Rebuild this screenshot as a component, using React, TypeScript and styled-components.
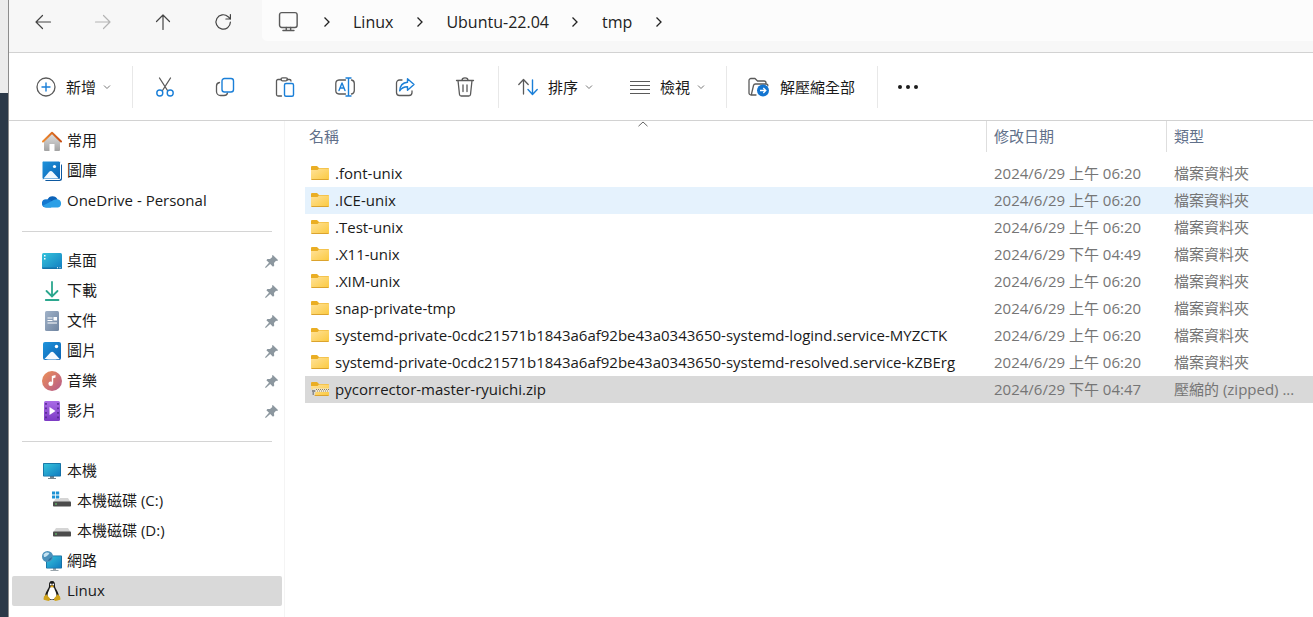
import React from "react";
import styled, { createGlobalStyle, css } from "styled-components";

const GlobalStyle = createGlobalStyle`
  *, *::before, *::after { box-sizing: border-box; }
  body {
    margin: 0;
    background: #fff;
    color: #1a1a1a;
    font: 15px/20px "Open Sans", "Noto Sans CJK TC", sans-serif;
  }
  button { font: inherit; color: inherit; }
`;

const Screen = styled.div`
  display: flex;
  min-height: 100vh;
  overflow: hidden;
`;

const Desktop = styled.div`
  flex: none;
  width: 8px;
  background: linear-gradient(#ececec 0 93px, #2b3948 93px);
`;

const Window = styled.div`
  flex: 1;
  min-width: 0;
  display: flex;
  flex-direction: column;
  border-left: 1px solid #8c8c8c;
`;

const NavBar = styled.header`
  display: flex;
  align-items: flex-start;
  height: 53px;
  padding-left: 4px;
  background: #f7f7f7;
  border-bottom: 1px solid #d2d2d2;
`;

const IconButton = styled.button<{ $dim?: boolean }>`
  display: flex;
  align-items: center;
  justify-content: center;
  width: 60px;
  height: 44px;
  padding: 0;
  border: 0;
  background: none;
  color: ${(p) => (p.$dim ? "#b4b4b4" : "#444")};
`;

const AddressBar = styled.nav`
  flex: 1;
  display: flex;
  align-items: center;
  height: 41px;
  margin-left: 9px;
  padding: 3px 0 0 16px;
  background: #fcfcfc;
  border-bottom-left-radius: 5px;
`;

const Crumb = styled.a`
  color: #222;
  font-size: 16px;
  line-height: 24px;
  text-decoration: none;
  white-space: nowrap;
`;

const CrumbArrow = styled.span`
  display: flex;
  justify-content: center;
  width: 53px;
`;

const Toolbar = styled.div`
  display: flex;
  align-items: center;
  height: 68px;
  border-bottom: 1px solid #d2d2d2;
`;

const ToolGroup = styled.div<{ $pad: string }>`
  display: flex;
  align-items: center;
  height: 42px;
  padding: ${(p) => p.$pad};
  border-right: 1px solid #e8e8e8;
  &:last-child { border-right: 0; }
`;

const ToolButton = styled.button`
  display: flex;
  align-items: center;
  gap: 10px;
  height: 40px;
  padding: 0;
  border: 0;
  background: none;
  white-space: nowrap;
  & + & { margin-left: 37px; }
`;

const ToolLabel = styled.span`
  display: flex;
  align-items: center;
  gap: 7px;
`;

const Body = styled.div`
  flex: 1;
  display: flex;
`;

const Sidebar = styled.nav`
  flex: none;
  width: 276px;
  padding: 5px 2px 0 3px;
  border-right: 1px solid #f4f4f4;
`;

const PlaceList = styled.ul`
  margin: 0;
  padding: 0;
  list-style: none;
  & + & {
    padding-top: 30px;
    background: linear-gradient(#d4d4d4, #d4d4d4) 10px 15px / calc(100% - 20px) 1px no-repeat;
  }
`;

const Place = styled.a<{ $nested?: boolean; $active?: boolean }>`
  display: flex;
  align-items: center;
  gap: 5px;
  height: 30px;
  padding: 0 4px 0 ${(p) => (p.$nested ? 40 : 30)}px;
  border-radius: 2px;
  color: #1a1a1a;
  text-decoration: none;
  background: ${(p) => (p.$active ? "#d9d9d9" : "none")};
`;

const PlaceName = styled.span`
  flex: 1;
  padding-bottom: 2px;
  white-space: nowrap;
`;

const Files = styled.main`
  position: relative;
  flex: 1;
  min-width: 0;
  padding-left: 20px;
`;

const SortMark = styled.span`
  position: absolute;
  top: 0;
  left: calc((100% - 323px) / 2);
  display: flex;
`;

const Table = styled.table`
  width: 100%;
  table-layout: fixed;
  border-collapse: collapse;
`;

const Col = styled.col<{ $w?: number }>`
  ${(p) => p.$w && css`width: ${p.$w}px;`}
`;

const HeadCell = styled.th`
  padding: 0 0 8px;
  color: #61708a;
  font-weight: 400;
  text-align: left;
`;

const HeadLabel = styled.div<{ $first?: boolean }>`
  height: 31px;
  padding: 5px 0 0 ${(p) => (p.$first ? 4 : 7)}px;
  border-left: ${(p) => (p.$first ? "0" : "1px solid #dedede")};
`;

const FileRow = styled.tr<{ $state?: "hover" | "selected" }>`
  height: 27px;
  background: ${(p) =>
    p.$state === "hover" ? "#e5f2fd" : p.$state === "selected" ? "#d9d9d9" : "none"};
`;

const Cell = styled.td`
  padding: 0 0 2px 8px;
  color: #757575;
  white-space: nowrap;
  overflow: hidden;
`;

const FileName = styled.div`
  display: flex;
  align-items: center;
  gap: 6px;
  margin-left: -2px;
  color: #1a1a1a;
`;

const Svg = ({ size = 20, children }: { size?: number; children: React.ReactNode }) => (
  <svg width={size} height={size} viewBox="0 0 20 20" fill="none" aria-hidden="true">
    {children}
  </svg>
);

const line = { stroke: "currentColor", strokeWidth: 1.2, strokeLinecap: "round", strokeLinejoin: "round" } as const;
const grey = { ...line, stroke: "#5a5a5a", strokeWidth: 1.3 } as const;
const blue = { ...line, stroke: "#1a7fd8", strokeWidth: 1.4 } as const;

const Back = () => <Svg><path {...line} d="M17.500 10H3M9.500 3.500 3 10l6.500 6.500" /></Svg>;
const Forward = () => <Svg><path {...line} d="M2.500 10H17M10.500 3.500 17 10l-6.500 6.500" /></Svg>;
const Up = () => <Svg><path {...line} d="M10 17.500V3M3.500 9.500 10 3l6.500 6.500" /></Svg>;
const Refresh = () => (
  <Svg><path {...line} d="M17.400 10a7.200 7.200 0 1 1-2.300-5.300L17.400 7M17.400 2.500V7h-4.500" /></Svg>
);
const Monitor = () => (
  <Svg size={22}>
    <rect {...grey} x="1.400" y="1.500" width="16" height="13.500" rx="2" />
    <path {...grey} d="M7.500 15v2.500M11.500 15v2.500M4.500 17.800h10" />
  </Svg>
);
const ChevronRight = () => (
  <svg width="8" height="12" viewBox="0 0 8 12" fill="none" aria-hidden="true">
    <path d="M1.500 1.500 6 6l-4.500 4.500" stroke="#222" strokeWidth="1.300" />
  </svg>
);
const ChevronDown = () => (
  <svg width="8" height="6" viewBox="0 0 8 6" fill="none" aria-hidden="true">
    <path d="M1 1.500 4 4.500l3-3" stroke="#777" />
  </svg>
);
const ChevronUp = () => (
  <svg width="10" height="6" viewBox="0 0 10 6" fill="none" aria-hidden="true">
    <path d="M.5 5.200 5 1l4.500 4.200" stroke="#666" />
  </svg>
);

const Plus = () => (
  <Svg>
    <circle {...grey} cx="10" cy="10" r="9" />
    <path {...blue} d="M10 6v8M6 10h8" />
  </Svg>
);
const Cut = () => (
  <Svg>
    <path {...grey} d="M4.500 1 12.500 13.500M15.500 1 7.500 13.500" />
    <circle {...blue} cx="4.800" cy="16" r="3" />
    <circle {...blue} cx="15.200" cy="16" r="3" />
  </Svg>
);
const Copy = () => (
  <Svg>
    <path {...grey} d="M4.500 5.500C2.500 5.800 1.500 7 1.500 9v5.500a4 4 0 0 0 4 4H9c2 0 3.200-1 3.500-2.700" />
    <rect {...blue} x="7" y="1.500" width="11.500" height="13.500" rx="2.500" />
  </Svg>
);
const Paste = () => (
  <Svg>
    <path {...grey} d="M6 2.500H3A1.500 1.500 0 0 0 1.500 4v13.500A1.500 1.500 0 0 0 3 19h3.500M12 2.500h2.500A1.500 1.500 0 0 1 16 4" />
    <rect {...grey} x="6" y=".8" width="6.500" height="3" rx="1.500" />
    <rect {...blue} x="9.500" y="6.500" width="9" height="12.700" rx="1.500" />
  </Svg>
);
const Rename = () => (
  <Svg>
    <path {...grey} d="M10.500 3H4A3.500 3.500 0 0 0 .8 6.500v7A3.500 3.500 0 0 0 4 17h6.500M16.500 3c1.800.3 2.800 1.500 2.800 3.500v7c0 2-1 3.200-2.800 3.500" />
    <path {...blue} d="m4 13.500 3-7.500 3 7.500M5 11h4M13.500 1v18M11 1h5M11 19h5" />
  </Svg>
);
const Share = () => (
  <Svg>
    <path {...grey} d="M7 3H4.500a3 3 0 0 0-3 3v9.500a3 3 0 0 0 3 3H14a3 3 0 0 0 3-3V14" />
    <path {...blue} d="M12.500 1.800 19 7.500l-6.500 5.700V9.800c-3.300 0-5.800 1-7.800 4 .3-5 3-8.300 7.800-8.600Z" />
  </Svg>
);
const Trash = () => (
  <Svg>
    <path {...grey} d="M1.500 3.500h17M7 3.200C7 1.500 8.200.8 10 .8s3 .7 3 2.400M3 3.500l1.500 14a1.700 1.700 0 0 0 1.700 1.500h7.600a1.700 1.700 0 0 0 1.700-1.500L17 3.500M8 8v6.500M12 8v6.500" />
  </Svg>
);
const Sort = () => (
  <Svg>
    <path {...grey} d="M5.500 17V3M.8 7.500 5.500 2.500l4.700 5" />
    <path {...blue} d="M14.500 3v14M10 12.500l4.500 5 4.700-5" />
  </Svg>
);
const Lines = () => (
  <Svg>
    <path stroke="#5a5a5a" d="M0 4.500h20M0 8.500h20M0 12.500h20M0 16.500h20" />
  </Svg>
);
const Extract = () => (
  <svg width="22" height="20" viewBox="0 0 22 20" fill="none" aria-hidden="true">
    <path {...grey} d="M8 18H3a2 2 0 0 1-2-2V3.500a2 2 0 0 1 2-2h4L9.500 4H16a2 2 0 0 1 2 2M3.500 17l2-8.500A2 2 0 0 1 7.500 7H18c1.200 0 2 .7 1.800 1.500" />
    <circle cx="15" cy="13.500" r="6" fill="#1274d0" />
    <path d="M12 13.500h5.500M15.300 11l2.500 2.500-2.500 2.500" stroke="#fff" strokeWidth="1.300" />
  </svg>
);
const More = () => (
  <Svg>
    <g fill="#1c1c1c"><circle cx="2" cy="10" r="2" /><circle cx="10" cy="10" r="2" /><circle cx="18" cy="10" r="2" /></g>
  </Svg>
);

const DefsSvg = styled.svg`
  position: absolute;
`;

const Defs = () => (
  <DefsSvg width="0" height="0" aria-hidden="true">
    <defs>
      <linearGradient id="folder" x1="0" y1="0" x2="1" y2="1"><stop stopColor="#ffe29a" /><stop offset="1" stopColor="#fbc93e" /></linearGradient>
      <linearGradient id="sky" x1="0" y1="0" x2="1" y2="1"><stop stopColor="#1f94dc" /><stop offset="1" stopColor="#0b62b2" /></linearGradient>
      <linearGradient id="teal" x1="0" y1="0" x2="1" y2="1"><stop stopColor="#36c4dc" /><stop offset="1" stopColor="#117cc0" /></linearGradient>
      <linearGradient id="wall" x1="0" y1="0" x2="0" y2="1"><stop stopColor="#e2e2e2" /><stop offset="1" stopColor="#a2a2a2" /></linearGradient>
      <linearGradient id="roof"><stop stopColor="#ef8c30" /><stop offset="1" stopColor="#c74f16" /></linearGradient>
      <linearGradient id="page" x1="0" y1="0" x2="1" y2="1"><stop stopColor="#a0b2c8" /><stop offset="1" stopColor="#6f84a0" /></linearGradient>
      <linearGradient id="music" x1="0" y1="0" x2="1" y2="1"><stop stopColor="#ee9156" /><stop offset="1" stopColor="#b4598c" /></linearGradient>
      <linearGradient id="film" x1="0" y1="0" x2="0" y2="1"><stop stopColor="#a96be6" /><stop offset="1" stopColor="#7c3bc4" /></linearGradient>
    </defs>
  </DefsSvg>
);

const Home = () => (
  <Svg>
    <path d="M2 9.500 10 2l8 7.500V19a1 1 0 0 1-1 1h-4.500v-7h-5v7H3a1 1 0 0 1-1-1Z" fill="url(#wall)" />
    <path d="M1 10.500 10 1.800l9 8.700" stroke="url(#roof)" strokeWidth="2" strokeLinejoin="round" strokeLinecap="round" />
  </Svg>
);
const Gallery = () => (
  <Svg>
    <path d="M3 17h14V3h1.500A1.500 1.500 0 0 1 20 4.500v13a2.500 2.500 0 0 1-2.500 2.500h-13A1.500 1.500 0 0 1 3 18.500Z" fill="#0c58a0" />
    <rect width="18.500" height="18.500" rx="1.500" fill="url(#sky)" stroke="#fff" />
    <path d="m1.500 17.500 5.500-6.500a2.500 2.500 0 0 1 3.700 0l6 6.500Z" fill="#f2f9ff" />
    <circle cx="12.500" cy="5.500" r="1.600" fill="#fff" />
  </Svg>
);
const Cloud = () => (
  <Svg>
    <path d="M5.500 8.500A5.500 5.500 0 0 1 15.500 8.300L12 14H4Z" fill="#0c62b8" />
    <path d="M4 16.500a4 4 0 0 1 0-8.200c3 0 5 1.200 8 3.700l-3 4.500Z" fill="#1478d0" />
    <path d="M15.500 8.300a4.200 4.200 0 0 1 .5 8.200H4.500a4 4 0 0 1-3.500-2l9-4.500c1.500-1 3.500-2 5.500-1.700Z" fill="#2b9fe6" />
  </Svg>
);
const DesktopIcon = () => (
  <Svg>
    <rect y="2" width="20" height="16" rx="1.500" fill="url(#teal)" />
    <path d="M0 16.500h20a1.500 1.500 0 0 1-1.500 1.500h-17A1.500 1.500 0 0 1 0 16.500Z" fill="#1271a8" />
    <path d="M2 4h1.500v1.500H2ZM2 7h1.500v1.500H2ZM15 16.300h1v1h-1ZM17.500 16.300h1v1h-1Z" fill="#fff" />
  </Svg>
);
const Download = () => (
  <Svg><path d="M10 1v14M4.500 10l5.500 5.500 5.500-5.500M3.800 19h12.700" stroke="#2ba78e" strokeWidth="1.800" strokeLinecap="round" /></Svg>
);
const Document = () => (
  <Svg>
    <rect x="3" width="14" height="20" rx="1.500" fill="url(#page)" />
    <path d="M5.500 7h5M5.500 9.500h5M5.500 12h9.500" stroke="#fff" strokeWidth="1.200" />
    <rect x="11.500" y="6" width="3.500" height="3.500" fill="#fff" />
  </Svg>
);
const Picture = () => (
  <Svg>
    <rect x="1" y="1" width="18" height="18" rx="2" fill="url(#sky)" />
    <path d="m2.500 18 6-6.500a2.200 2.200 0 0 1 3.200 0l6 6.500c-.3.500-14.700.7-15.200 0Z" fill="#f5faff" />
    <circle cx="14.500" cy="5.500" r="1.700" fill="#fff" />
  </Svg>
);
const Music = () => (
  <Svg>
    <circle cx="10" cy="10" r="10" fill="url(#music)" />
    <circle cx="8.700" cy="12.800" r="2.300" fill="#fff" />
    <path d="M9.800 12.800V5L13.500 4v2.600l-2.300.7v5.500Z" fill="#fff" />
  </Svg>
);
const Video = () => (
  <Svg>
    <rect x="2" width="16" height="20" rx="1.500" fill="url(#film)" />
    <path d="M4 2v17M16 2v17" stroke="#4c2386" strokeWidth="1.500" strokeDasharray="1.800 2.700" />
    <path d="M7.500 6v8l6-4Z" fill="#fff" />
  </Svg>
);
const ThisPC = () => (
  <Svg>
    <path d="M8 15h4v2H8ZM6 17h8v1H6Z" fill="#77838c" />
    <rect x="1" y="2" width="18" height="13.500" rx=".8" fill="#136a9e" />
    <rect x="1.800" y="2.800" width="16.400" height="12" fill="url(#teal)" />
  </Svg>
);
const Drive = ({ system }: { system?: boolean }) => (
  <Svg>
    <path d="m4 7-2.500 4h17L16 7Z" fill="#d5d5d5" />
    {system && (
      <>
        <path d="M0 0h8v8H0Z" fill="#fff" />
        <path d="M0 .5h3.200v3H0ZM4 .5h3.200v3H4ZM0 4.500h3.200v3H0ZM4 4.500h3.200v3H4Z" fill="#1c92d4" />
      </>
    )}
    <rect x="1" y="10.500" width="18" height="5" rx=".8" fill="#4c4c4c" />
    <path d="M3 13h2" stroke="#62d16c" strokeWidth="1.200" />
  </Svg>
);
const Network = () => (
  <Svg>
    <path d="M11 17h3v2h-3ZM8.500 19h8v1h-8Z" fill="#9aa5ac" />
    <rect x="4" y="4.500" width="16" height="13" rx=".8" fill="#136a9e" />
    <rect x="4.800" y="5.300" width="14.400" height="11.500" fill="url(#teal)" />
    <circle cx="5.500" cy="5.500" r="5.500" fill="#4b91bb" />
    <path d="M1.500 3.500C3 1 6 1 7.500 2 6.500 4 3.500 6.500 2 6Z" fill="#c5e3f2" />
    <path d="M6 10c1-3 3-3 4-4-.2 2-1.700 3.800-4 4Z" fill="#2a6d9c" />
  </Svg>
);
const Penguin = () => (
  <Svg>
    <path d="M10 0C7.500 0 6.800 2 7 5c0 2.500-3.500 5.500-4 10l3 4h8l3-4c-.5-4.500-4-7.500-4-10 .2-3-.5-5-3-5Z" fill="#191919" />
    <path d="M10 6c-1.500 0-2 .5-2.300 1.500C7 10 5.300 12 5.500 15c.2 2 2.500 3.500 4.500 3.500s4.300-1.500 4.500-3.500c.2-3-1.500-5-2.200-7.500C12 6.500 11.500 6 10 6Z" fill="#fff" />
    <circle cx="8.800" cy="3.500" r=".9" fill="#fff" /><circle cx="11.200" cy="3.500" r=".9" fill="#fff" />
    <path d="M8 5.200 10 4.300l2 .9-2 1.500Z" fill="#e5a914" />
    <path d="M4 13 7.800 17.300c.7 1.700-.5 2.900-2.300 2.500L1.800 18.700c-.8-.7.2-1.700 0-2.700.2-1.300 1.500-.8 2.200-3ZM16 13 12.200 17.300c-.7 1.700.5 2.900 2.300 2.500l3.700-1.100c.8-.7-.2-1.700 0-2.700-.2-1.300-1.500-.8-2.200-3Z" fill="#d0a31c" />
  </Svg>
);
const Pin = () => (
  <svg width="13" height="13" viewBox="0 0 13 13" aria-hidden="true">
    <path d="M7.800 0 13 5l-.7 1-1.300-.2-2 2.200.2 2.700-1.200 1L5.200 9 .8 13 0 12.200l4-4.500-2.600-2.500 1-1.200L5 4l2.300-2-.3-1.300Z" fill="#8c979f" />
  </svg>
);
const Folder = ({ zip }: { zip?: boolean }) => (
  <svg width="18" height="16" viewBox="0 0 18 16" aria-hidden="true">
    <path d="M0 2a1 1 0 0 1 1-1h5l2 2h9a1 1 0 0 1 1 1v4H0Z" fill="#eaae24" />
    <path d="M0 5h6.500L8 3.500h10V14a1 1 0 0 1-1 1H1a1 1 0 0 1-1-1Z" fill="url(#folder)" />
    <path d="M.5 14.500h17" stroke="#dba32e" />
    {zip && (
      <>
        <path d="M2 7.500h16v3.500H2Z" fill="#f1e9d2" />
        <path d="M5 8.500h13M4 10h14" stroke="#8b7f62" strokeDasharray="1 1" />
        <path d="M0 8.500h4.500v2.500l-1 4H0Z" fill="#d9d9d9" />
        <path d="M1 9h3v2H1ZM1.500 11h1.500v3H1.500Z" fill="#8d8d8d" />
      </>
    )}
  </svg>
);

type PlaceData = { name: string; icon: React.ReactNode; pinned?: boolean; nested?: boolean; active?: boolean };

const places: PlaceData[][] = [
  [
    { name: "常用", icon: <Home /> },
    { name: "圖庫", icon: <Gallery /> },
    { name: "OneDrive - Personal", icon: <Cloud /> },
  ],
  [
    { name: "桌面", icon: <DesktopIcon />, pinned: true },
    { name: "下載", icon: <Download />, pinned: true },
    { name: "文件", icon: <Document />, pinned: true },
    { name: "圖片", icon: <Picture />, pinned: true },
    { name: "音樂", icon: <Music />, pinned: true },
    { name: "影片", icon: <Video />, pinned: true },
  ],
  [
    { name: "本機", icon: <ThisPC /> },
    { name: "本機磁碟 (C:)", icon: <Drive system />, nested: true },
    { name: "本機磁碟 (D:)", icon: <Drive />, nested: true },
    { name: "網路", icon: <Network /> },
    { name: "Linux", icon: <Penguin />, active: true },
  ],
];

type FileData = { name: string; date: string; state?: "hover" | "selected"; zip?: boolean };

const files: FileData[] = [
  { name: ".font-unix", date: "2024/6/29 上午 06:20" },
  { name: ".ICE-unix", date: "2024/6/29 上午 06:20", state: "hover" },
  { name: ".Test-unix", date: "2024/6/29 上午 06:20" },
  { name: ".X11-unix", date: "2024/6/29 下午 04:49" },
  { name: ".XIM-unix", date: "2024/6/29 上午 06:20" },
  { name: "snap-private-tmp", date: "2024/6/29 上午 06:20" },
  { name: "systemd-private-0cdc21571b1843a6af92be43a0343650-systemd-logind.service-MYZCTK", date: "2024/6/29 上午 06:20" },
  { name: "systemd-private-0cdc21571b1843a6af92be43a0343650-systemd-resolved.service-kZBErg", date: "2024/6/29 上午 06:20" },
  { name: "pycorrector-master-ryuichi.zip", date: "2024/6/29 下午 04:47", state: "selected", zip: true },
];

export default function App() {
  return (
    <Screen>
      <GlobalStyle />
      <Defs />
      <Desktop />
      <Window>
        <NavBar>
          <IconButton aria-label="上一頁"><Back /></IconButton>
          <IconButton aria-label="下一頁" $dim><Forward /></IconButton>
          <IconButton aria-label="上移"><Up /></IconButton>
          <IconButton aria-label="重新整理"><Refresh /></IconButton>
          <AddressBar aria-label="路徑">
            <Monitor />
            {["Linux", "Ubuntu-22.04", "tmp"].map((name) => (
              <React.Fragment key={name}>
                <CrumbArrow><ChevronRight /></CrumbArrow>
                <Crumb href="#">{name}</Crumb>
              </React.Fragment>
            ))}
            <CrumbArrow><ChevronRight /></CrumbArrow>
          </AddressBar>
        </NavBar>
        <Toolbar>
          <ToolGroup $pad="0 21px 0 27px">
            <ToolButton><Plus /><ToolLabel>新增 <ChevronDown /></ToolLabel></ToolButton>
          </ToolGroup>
          <ToolGroup $pad="0 3px 0 2px">
            <IconButton aria-label="剪下"><Cut /></IconButton>
            <IconButton aria-label="複製"><Copy /></IconButton>
            <IconButton aria-label="貼上"><Paste /></IconButton>
            <IconButton aria-label="重新命名"><Rename /></IconButton>
            <IconButton aria-label="共用"><Share /></IconButton>
            <IconButton aria-label="刪除"><Trash /></IconButton>
          </ToolGroup>
          <ToolGroup $pad="0 21px 0 19px">
            <ToolButton><Sort /><ToolLabel>排序 <ChevronDown /></ToolLabel></ToolButton>
            <ToolButton><Lines /><ToolLabel>檢視 <ChevronDown /></ToolLabel></ToolButton>
          </ToolGroup>
          <ToolGroup $pad="0 22px 0 21px">
            <ToolButton><Extract /><ToolLabel>解壓縮全部</ToolLabel></ToolButton>
          </ToolGroup>
          <ToolGroup $pad="0">
            <IconButton aria-label="查看更多"><More /></IconButton>
          </ToolGroup>
        </Toolbar>
        <Body>
          <Sidebar aria-label="位置">
            {places.map((group, i) => (
              <PlaceList key={i}>
                {group.map((p) => (
                  <li key={p.name}>
                    <Place href="#" $nested={p.nested} $active={p.active}>
                      {p.icon}
                      <PlaceName>{p.name}</PlaceName>
                      {p.pinned && <Pin />}
                    </Place>
                  </li>
                ))}
              </PlaceList>
            ))}
          </Sidebar>
          <Files>
            <SortMark><ChevronUp /></SortMark>
            <Table>
              <colgroup><Col /><Col $w={180} /><Col $w={147} /></colgroup>
              <thead>
                <tr>
                  <HeadCell scope="col"><HeadLabel $first>名稱</HeadLabel></HeadCell>
                  <HeadCell scope="col"><HeadLabel>修改日期</HeadLabel></HeadCell>
                  <HeadCell scope="col"><HeadLabel>類型</HeadLabel></HeadCell>
                </tr>
              </thead>
              <tbody>
                {files.map((f) => (
                  <FileRow key={f.name} $state={f.state}>
                    <Cell><FileName><Folder zip={f.zip} />{f.name}</FileName></Cell>
                    <Cell>{f.date}</Cell>
                    <Cell>{f.zip ? "壓縮的 (zipped) ..." : "檔案資料夾"}</Cell>
                  </FileRow>
                ))}
              </tbody>
            </Table>
          </Files>
        </Body>
      </Window>
    </Screen>
  );
}
